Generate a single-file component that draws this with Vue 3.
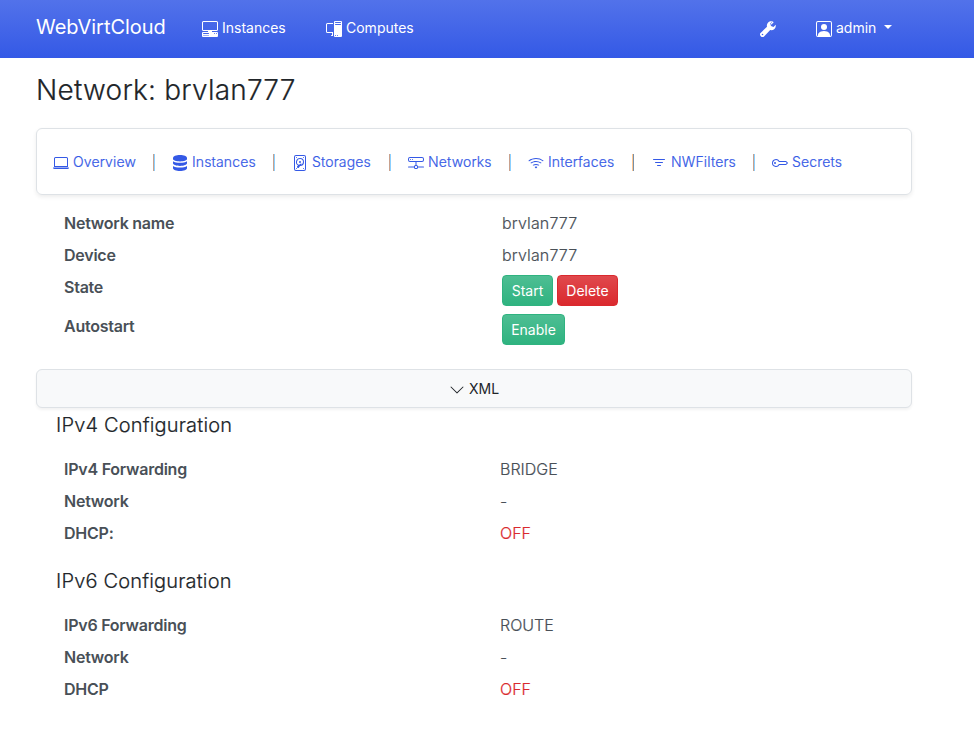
<script setup>
const tabs = [
  { name: 'overview', label: 'Overview', icon: ['M13.5 3a.5.5 0 0 1 .5.5V11H2V3.5a.5.5 0 0 1 .5-.5zm-11-1A1.5 1.5 0 0 0 1 3.5V12h14V3.5A1.5 1.5 0 0 0 13.5 2zM0 12.5h16a1.5 1.5 0 0 1-1.5 1.5h-13A1.5 1.5 0 0 1 0 12.5'] },
  { name: 'instances', label: 'Instances', icon: ['M1 3c0-1.7 3.1-3 7-3s7 1.3 7 3v1c0 1.3-3.1 2.4-7 2.4S1 5.300 1 4z', 'M1 6.200c1.500 1 4.100 1.500 7 1.500s5.500-.5 7-1.500V8.300c0 1.400-3.100 2.600-7 2.600s-7-1.200-7-2.600z', 'M1 11c1.500 1 4.100 1.500 7 1.500s5.500-.5 7-1.500v2.300c0 1.500-3.100 2.700-7 2.700s-7-1.200-7-2.700z'] },
  { name: 'storages', label: 'Storages', icon: ['M12 2.500a.5.5 0 1 1-1 0 .5.5 0 0 1 1 0m0 11a.5.5 0 1 1-1 0 .5.5 0 0 1 1 0m-7.500.5a.5.5 0 1 0 0-1 .5.5 0 0 0 0 1M5 2.500a.5.5 0 1 1-1 0 .5.5 0 0 1 1 0M8 8a1 1 0 1 0 0-2 1 1 0 0 0 0 2', 'M12 7a4 4 0 0 1-3.937 4c-.537.813-1.020 1.515-1.181 1.677a1.102 1.102 0 0 1-1.560-1.559c.1-.098.396-.314.795-.588A4 4 0 0 1 8 3a4 4 0 0 1 4 4m-1 0a3 3 0 1 0-3.891 2.865c.667-.44 1.396-.91 1.955-1.268.224-.144.483.115.340.34l-.620.960A3 3 0 0 0 11 7', 'M2 2a2 2 0 0 1 2-2h8a2 2 0 0 1 2 2v12a2 2 0 0 1-2 2H4a2 2 0 0 1-2-2zm2-1a1 1 0 0 0-1 1v12a1 1 0 0 0 1 1h8a1 1 0 0 0 1-1V2a1 1 0 0 0-1-1z'] },
  { name: 'networks', label: 'Networks', icon: ['M4.500 5a.5.5 0 1 0 0-1 .5.5 0 0 0 0 1M3 4.500a.5.5 0 1 1-1 0 .5.5 0 0 1 1 0', 'M0 4a2 2 0 0 1 2-2h12a2 2 0 0 1 2 2v1a2 2 0 0 1-2 2H8.500v3a1.500 1.500 0 0 1 1.500 1.500h5.500a.5.5 0 0 1 0 1H10A1.500 1.500 0 0 1 8.500 14h-1A1.500 1.500 0 0 1 6 12.500H.5a.5.5 0 0 1 0-1H6A1.500 1.500 0 0 1 7.500 10V7H2a2 2 0 0 1-2-2zm1 0v1a1 1 0 0 0 1 1h12a1 1 0 0 0 1-1V4a1 1 0 0 0-1-1H2a1 1 0 0 0-1 1m6 7.500v1a.5.5 0 0 0 .5.5h1a.5.5 0 0 0 .5-.5v-1a.5.5 0 0 0-.5-.5h-1a.5.5 0 0 0-.5.5'] },
  { name: 'interfaces', label: 'Interfaces', icon: ['M15.384 6.115a.485.485 0 0 0-.047-.736A12.440 12.440 0 0 0 8 3C5.259 3 2.723 3.882.663 5.379a.485.485 0 0 0-.048.736.520.520 0 0 0 .668.050A11.450 11.450 0 0 1 8 4c2.507 0 4.827.802 6.716 2.164.205.148.490.130.668-.049', 'M13.229 8.271a.482.482 0 0 0-.063-.745A9.460 9.460 0 0 0 8 6c-1.905 0-3.680.560-5.166 1.526a.480.480 0 0 0-.063.745.525.525 0 0 0 .652.065A8.460 8.460 0 0 1 8 7a8.460 8.460 0 0 1 4.576 1.336c.206.132.480.108.653-.065m-2.183 2.183c.226-.226.185-.605-.1-.750A6.500 6.500 0 0 0 8 9c-1.060 0-2.062.254-2.946.704-.285.145-.326.524-.1.750l.015.015c.160.160.407.190.611.090A5.500 5.500 0 0 1 8 10c.868 0 1.690.201 2.420.560.203.1.450.070.610-.091zM9.060 12.440c.196-.196.198-.520-.040-.660A2 2 0 0 0 8 11.500a2 2 0 0 0-1.020.280c-.238.140-.236.464-.040.660l.706.706a.5.5 0 0 0 .707 0z'] },
  { name: 'filters', label: 'NWFilters', icon: ['M6 10.500a.5.5 0 0 1 .5-.5h3a.5.5 0 0 1 0 1h-3a.5.5 0 0 1-.5-.5m-2-3a.5.5 0 0 1 .5-.5h7a.5.5 0 0 1 0 1h-7a.5.5 0 0 1-.5-.5m-2-3a.5.5 0 0 1 .5-.5h11a.5.5 0 0 1 0 1h-11a.5.5 0 0 1-.5-.5'] },
  { name: 'secrets', label: 'Secrets', icon: ['M0 8a4 4 0 0 1 7.465-2H14a.5.5 0 0 1 .354.146l1.500 1.500a.5.5 0 0 1 0 .708l-1.500 1.500A.5.5 0 0 1 14 10H7.465A4 4 0 0 1 0 8m4-3a3 3 0 1 0 2.712 4.285A.5.5 0 0 1 7.163 9H13.800l1-1-1-1H7.163a.5.5 0 0 1-.451-.285A3 3 0 0 0 4 5', 'M4 8a1 1 0 1 1-2 0 1 1 0 0 1 2 0'] },
]
const sections = [
  { title: 'IPv4 Configuration', rows: [['IPv4 Forwarding', 'BRIDGE'], ['Network', '-'], ['DHCP:', 'OFF']] },
  { title: 'IPv6 Configuration', rows: [['IPv6 Forwarding', 'ROUTE'], ['Network', '-'], ['DHCP', 'OFF']] },
]
</script>

<template>
  <div class="page">
    <header class="navbar">
      <span class="brand">WebVirtCloud</span>
      <a class="nav-link nav-instances">
        <svg class="icon" viewBox="0 0 16 16"><path d="M1.500 0A1.500 1.500 0 0 0 0 1.500v7A1.500 1.500 0 0 0 1.500 10H6v1H1a1 1 0 0 0-1 1v3a1 1 0 0 0 1 1h14a1 1 0 0 0 1-1v-3a1 1 0 0 0-1-1h-5v-1h4.500A1.500 1.500 0 0 0 16 8.500v-7A1.500 1.500 0 0 0 14.500 0zm0 1h13a.5.5 0 0 1 .5.5v7a.5.5 0 0 1-.5.5h-13a.5.5 0 0 1-.5-.5v-7a.5.5 0 0 1 .5-.5M12 12.500a.5.5 0 1 1 1 0 .5.5 0 0 1-1 0m2 0a.5.5 0 1 1 1 0 .5.5 0 0 1-1 0M1.500 12h5a.5.5 0 0 1 0 1h-5a.5.5 0 0 1 0-1M1 14.250a.250.250 0 0 1 .250-.250h5.500a.250.250 0 1 1 0 .5h-5.500a.250.250 0 0 1-.250-.250" /></svg>
        <span>Instances</span>
      </a>
      <a class="nav-link nav-computes">
        <svg class="icon" viewBox="0 0 16 16"><path d="M8 1a1 1 0 0 1 1-1h6a1 1 0 0 1 1 1v14a1 1 0 0 1-1 1H9a1 1 0 0 1-1-1zm1 13.500a.5.5 0 1 0 1 0 .5.5 0 0 0-1 0m2 0a.5.5 0 1 0 1 0 .5.5 0 0 0-1 0M9.500 1a.5.5 0 0 0 0 1h5a.5.5 0 0 0 0-1zM9 3.500a.5.5 0 0 0 .5.5h5a.5.5 0 0 0 0-1h-5a.5.5 0 0 0-.5.5M1.500 2A1.500 1.500 0 0 0 0 3.500v7A1.500 1.500 0 0 0 1.500 12H6v2h-.5a.5.5 0 0 0 0 1H7v-4H1.500a.5.5 0 0 1-.5-.5v-7a.5.5 0 0 1 .5-.5H7V2z" /></svg>
        <span>Computes</span>
      </a>
      <a class="tools">
        <svg class="icon" viewBox="0 0 16 16"><path fill-rule="evenodd" d="M15.700 3.700 13.500 5.900 11 5.100 10.200 2.500 12.400.3A4.500 4.500 0 0 0 7 5.800L.8 11.700A2.500 2.500 0 0 0 4.300 15.300L10.200 9A4.500 4.500 0 0 0 15.700 3.700ZM3.300 13.500a.8.8 0 1 1-1.600 0 .8.8 0 0 1 1.600 0Z" /><path d="m12.400.3 1.300.9-2.200 2.200-.9-.2Z" /></svg>
      </a>
      <a class="nav-link nav-user">
        <svg class="icon" viewBox="0 0 16 16"><path d="M11 6a3 3 0 1 1-6 0 3 3 0 0 1 6 0" /><path d="M2 0a2 2 0 0 0-2 2v12a2 2 0 0 0 2 2h12a2 2 0 0 0 2-2V2a2 2 0 0 0-2-2zm12 1a1 1 0 0 1 1 1v12a1 1 0 0 1-1 1v-1c0-1-1-4-6-4s-6 3-6 4v1a1 1 0 0 1-1-1V2a1 1 0 0 1 1-1z" /></svg>
        <span>admin</span>
        <i class="caret"></i>
      </a>
    </header>

    <main>
      <h1>Network: brvlan777</h1>
      <nav class="card">
        <div v-for="tab in tabs" :key="tab.name" class="tab" :class="tab.name">
          <svg class="icon" viewBox="0 0 16 16"><path v-for="d in tab.icon" :key="d" :d="d" /></svg>
          <span>{{ tab.label }}</span>
        </div>
      </nav>

      <dl class="details">
        <div class="row"><dt>Network name</dt><dd>brvlan777</dd></div>
        <div class="row"><dt>Device</dt><dd>brvlan777</dd></div>
        <div class="row tall">
          <dt>State</dt>
          <dd><button class="btn success start">Start</button><button class="btn danger">Delete</button></dd>
        </div>
        <div class="row tall"><dt>Autostart</dt><dd><button class="btn success enable">Enable</button></dd></div>
      </dl>

      <button class="xml">
        <svg class="icon" viewBox="0 0 16 16"><path d="M1.646 4.646a.5.5 0 0 1 .708 0L8 10.293l5.646-5.647a.5.5 0 0 1 .708.708l-6 6a.5.5 0 0 1-.708 0l-6-6a.5.5 0 0 1 0-.708" /></svg>
        <span>XML</span>
      </button>

      <section v-for="s in sections" :key="s.title">
        <h2>{{ s.title }}</h2>
        <dl>
          <div v-for="r in s.rows" :key="r[0]" class="row">
            <dt>{{ r[0] }}</dt><dd :class="{ off: r[1] === 'OFF' }">{{ r[1] }}</dd>
          </div>
        </dl>
      </section>
    </main>
  </div>
</template>

<style>
body { background: #fff; }
</style>

<style scoped>
.page { height: 739px; overflow: hidden; font-family: Inter, "Liberation Sans", sans-serif; font-size: 16px; font-weight: 300; line-height: 24px; color: #495057; }
.page * { box-sizing: border-box; }
.icon { width: 16px; height: 16px; flex: none; fill: currentColor; }
.navbar { height: 58px; padding: 0 0 2px 36px; display: flex; align-items: center; color: #fff; background: linear-gradient(180deg, #5272ea, #3459e6); white-space: nowrap; }
.brand { width: 166px; font-size: 20px; font-weight: 400; line-height: 30px; padding-bottom: 3px; letter-spacing: -.03px; }
.nav-link { display: flex; align-items: center; gap: 4px; font-size: 14px; font-weight: 400; }
.nav-link .icon { margin-top: 1px; }
.nav-instances { width: 124px; }
.nav-computes { width: 434px; }
.tools { width: 56px; display: flex; padding-top: 1px; }
.caret { border: 4px solid transparent; border-top-color: #fff; border-bottom: 0; margin: -2px 0 0 4px; }
main { padding: 0 62px 0 36px; }
h1 { margin: 14px 0 20px; font-size: 28px; line-height: 36px; font-weight: 300; letter-spacing: .22px; -webkit-text-stroke: .2px; color: #212529; }
.card { height: 67px; padding: 1px 16px 0; display: flex; align-items: center; border: 1px solid #dee2e6; border-radius: 6px; box-shadow: 0 2px 4px rgba(0, 0, 0, .075); white-space: nowrap; }
.tab { display: flex; align-items: center; gap: 4px; height: 22px; font-size: 14px; letter-spacing: .15px; color: #3459e6; }
.tab span { -webkit-text-stroke: .2px; }
.tab .icon { margin-top: 2px; }
.tab:not(:last-child)::after { content: ""; width: 2px; height: 17px; margin-left: auto; background: linear-gradient(90deg, #c9a18d 50%, #8bd0ff 50%); }
.overview { width: 102px; margin-right: 17px; }
.instances { width: 103px; margin-right: 17px; }
.storages { width: 99px; margin-right: 17px; }
.networks { width: 103px; margin-right: 17px; }
.interfaces { width: 106px; margin-right: 17px; }
.tab.interfaces::after { background: linear-gradient(90deg, #ffc792 50%, #7890a8 50%); }
.filters { width: 104px; margin-right: 17px; }
dl, dt, dd { margin: 0; }
.details { padding-top: 12px; height: 174px; }
.row { display: grid; grid-template-columns: 436px 1fr; height: 32px; padding: 4px 0 4px 28px; }
.details .row { grid-template-columns: 438px 1fr; }
.row.tall { height: 39px; }
dt { font-weight: 600; letter-spacing: -.24px; }
dd { -webkit-text-stroke: .2px; }
.details dd { letter-spacing: .15px; }
.off { color: #da292e; }
.btn { height: 31px; padding: 0; border-radius: 4px; color: #fff; font: 400 14px/21px Inter, sans-serif; -webkit-text-stroke: 0; }
.success { border: 1px solid #2fb380; background: linear-gradient(180deg, #4ebe93, #2fb380); }
.danger { width: 61px; border: 1px solid #da292e; background: linear-gradient(180deg, #e0494d, #da292e); }
.start { width: 51px; margin-right: 4px; }
.enable { width: 63px; }
.tall dd { display: flex; }
.xml { width: 100%; height: 39px; display: flex; align-items: center; justify-content: center; gap: 4px; border: 1px solid #dee2e6; border-radius: 6px; background: #f8f9fa; box-shadow: 0 2px 3px rgba(0, 0, 0, .05); font: 400 14px/21px Inter, sans-serif; color: #212529; }
.xml .icon { margin-top: 2px; }
section { height: 156px; }
h2 { margin: 0; padding: 5px 0 0 20px; height: 45px; font-size: 20px; line-height: 24px; font-weight: 300; letter-spacing: .17px; -webkit-text-stroke: .2px; color: #212529; }
</style>
